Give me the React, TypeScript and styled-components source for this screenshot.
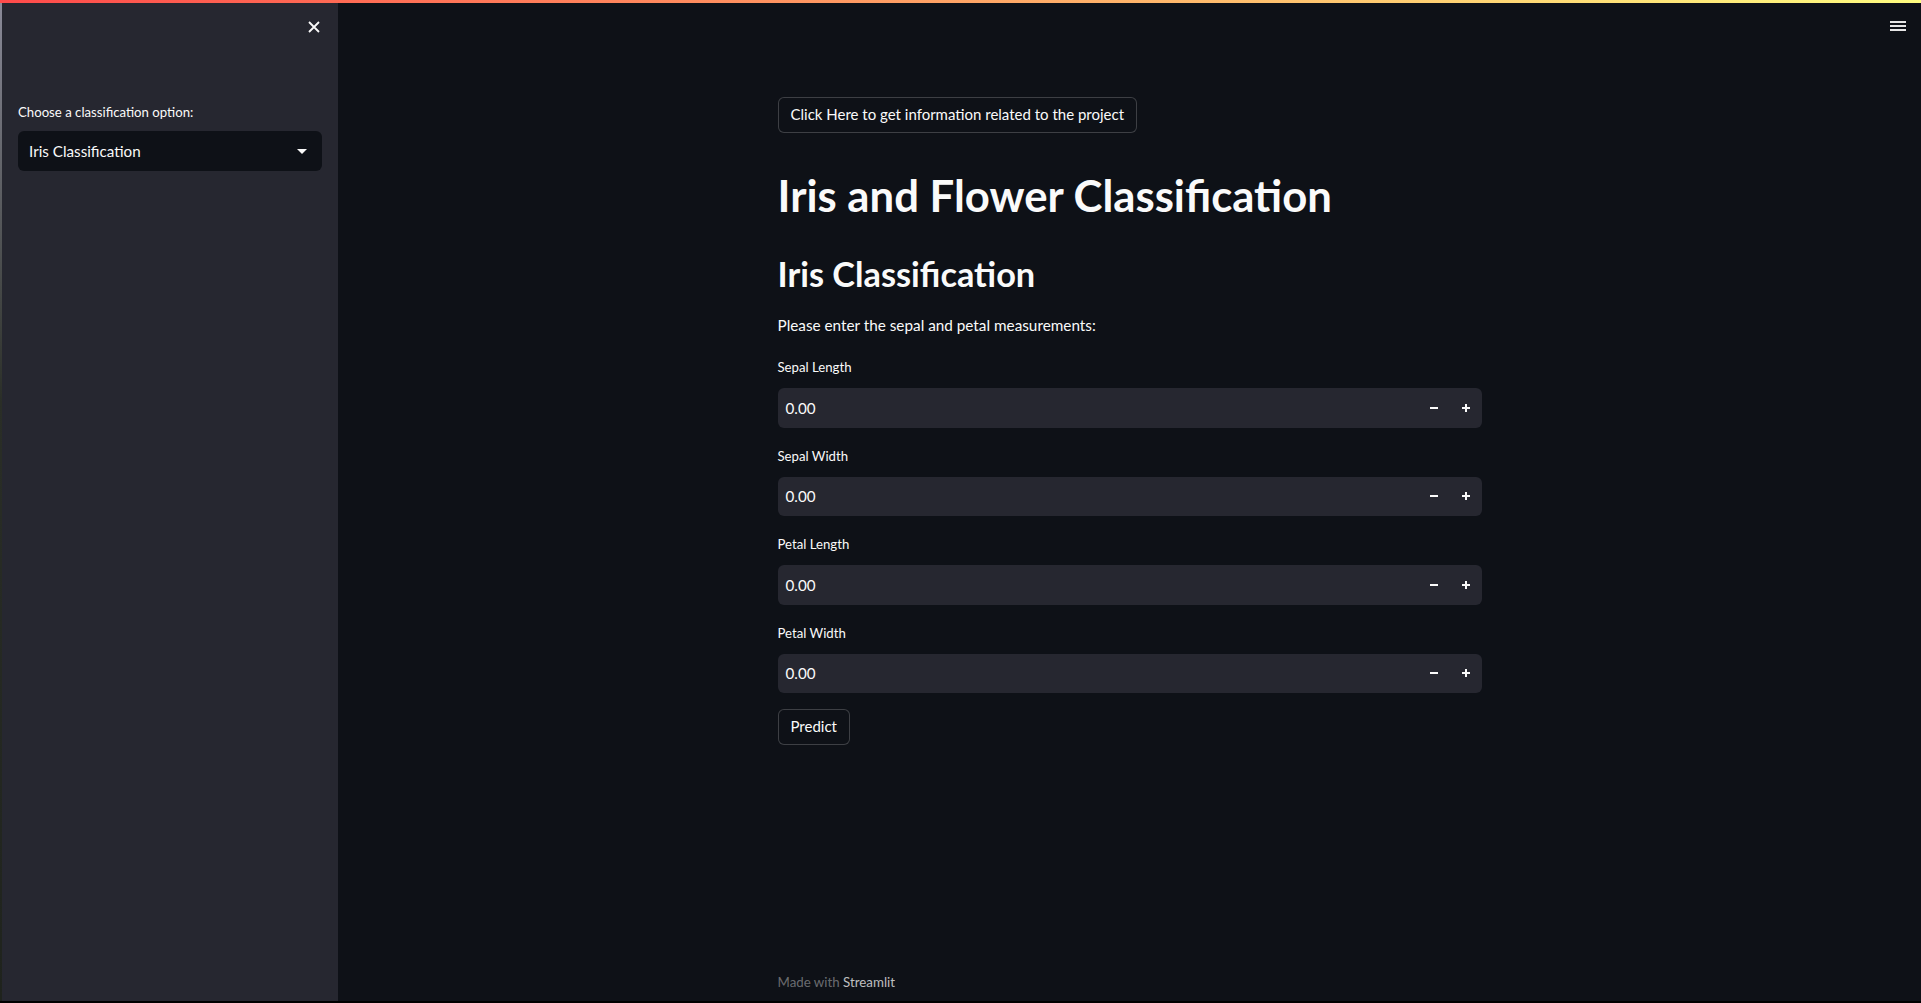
import React from "react";
import styled, { createGlobalStyle } from "styled-components";

const FONT = `Lato, "Noto Sans", sans-serif`;

const GlobalStyle = createGlobalStyle`
  html, body { margin: 0; padding: 0; background: #0e1117; }
  body { font-family: ${FONT}; color: #fafafa; }
  * { box-sizing: border-box; }
`;

const Page = styled.div`
  position: relative;
  width: 1921px;
  height: 1003px;
  display: flex;
  flex-direction: column;
  overflow: hidden;
  background: #0e1117;
`;
const Decoration = styled.div`
  flex: none;
  height: 3px;
  background: linear-gradient(90deg, #ff4b4b, #fffd80);
`;
const BodyRow = styled.div`
  flex: 1;
  display: flex;
  min-height: 0;
`;
const BottomBand = styled.div`
  flex: none;
  height: 2px;
  background: #000;
`;
const Edge = styled.div`
  flex: none;
  width: 2px;
  background: linear-gradient(#8a8a98, #2a2e27 40%, #1f231d);
`;
const Sidebar = styled.aside`
  flex: none;
  width: 336px;
  background: #262730;
  display: flex;
  flex-direction: column;
  padding: 0 16px 0 16px;
`;
const SidebarHeader = styled.div`
  height: 48px;
  display: flex;
  align-items: center;
  justify-content: flex-end;
  padding-right: 2px;
`;
const SideLabel = styled.div`
  margin-top: 49px;
  font-size: 13.2px;
  line-height: 24px;
  height: 24px;
`;
const Select = styled.div`
  margin-top: 7px;
  height: 40px;
  background: #0e1117;
  border-radius: 6px;
  display: flex;
  align-items: center;
  justify-content: space-between;
  padding: 0 15px 0 11px;
  font-size: 15.2px;
`;
const Main = styled.main`
  position: relative;
  flex: 1;
  display: flex;
  justify-content: center;
  min-width: 0;
`;
const Block = styled.div`
  width: 736px;
  padding: 94px 16px 7px;
  display: flex;
  flex-direction: column;
`;
const Button = styled.button<{ $top?: number }>`
  align-self: flex-start;
  margin-top: ${(p) => p.$top ?? 0}px;
  height: 35.6px;
  padding: 0 12px;
  border: 1px solid rgba(250, 250, 250, 0.2);
  border-radius: 6px;
  background: #0e1117;
  color: #fafafa;
  font-family: ${FONT};
  font-size: 15px;
  line-height: 1;
`;
const Title = styled.h1`
  margin: 36.5px 0 0;
  font-size: 43.7px;
  line-height: 53px;
  font-weight: 700;
`;
const Subtitle = styled.h2`
  margin: 30px 0 0;
  font-size: 34.3px;
  line-height: 43px;
  font-weight: 700;
`;
const Para = styled.p`
  margin: 16.5px 0 1.5px;
  font-size: 15.3px;
  line-height: 26px;
`;
const Field = styled.div`
  margin-top: 16px;
  display: flex;
  flex-direction: column;
`;
const FieldLabel = styled.label`
  font-size: 13.2px;
  line-height: 25px;
  height: 25px;
  margin-bottom: 8px;
`;
const InputBox = styled.div`
  height: 39.5px;
  background: #262730;
  border-radius: 6px;
  display: flex;
  align-items: center;
`;
const InputValue = styled.span`
  flex: 1;
  padding-left: 8px;
  font-size: 15.2px;
`;
const StepButton = styled.span`
  width: 32px;
  height: 100%;
  display: flex;
  align-items: center;
  justify-content: center;
`;
const Footer = styled.div`
  margin-top: auto;
  font-size: 13.3px;
  line-height: 24px;
  color: rgba(250, 250, 250, 0.4);
`;
const FooterLink = styled.span`
  color: rgba(250, 250, 250, 0.75);
`;
const Hamburger = styled.div`
  position: absolute;
  top: 18px;
  right: 15px;
  width: 16px;
  display: flex;
  flex-direction: column;
  gap: 2px;
`;
const Bar = styled.span`
  height: 2px;
  background: #e6e6e6;
`;

const Minus = () => (
  <svg width="8" height="8" viewBox="0 0 8 8">
    <rect x="0" y="3" width="8" height="2" fill="#fafafa" />
  </svg>
);
const Plus = () => (
  <svg width="8" height="8" viewBox="0 0 8 8">
    <rect x="0" y="3" width="8" height="2" fill="#fafafa" />
    <rect x="3" y="0" width="2" height="8" fill="#fafafa" />
  </svg>
);
const CloseIcon = () => (
  <svg width="12" height="12" viewBox="0 0 12 12">
    <path d="M1 1L11 11M11 1L1 11" stroke="#fafafa" strokeWidth="1.8" />
  </svg>
);
const Caret = () => (
  <svg width="10" height="5" viewBox="0 0 10 5">
    <polygon points="0,0 10,0 5,5" fill="#fafafa" />
  </svg>
);

const fields = ["Sepal Length", "Sepal Width", "Petal Length", "Petal Width"];

export default function App() {
  return (
    <>
      <GlobalStyle />
      <Page>
        <Decoration />
        <BodyRow>
          <Edge />
          <Sidebar>
            <SidebarHeader>
              <CloseIcon />
            </SidebarHeader>
            <SideLabel>Choose a classification option:</SideLabel>
            <Select>
              <span>Iris Classification</span>
              <Caret />
            </Select>
          </Sidebar>
          <Main>
            <Hamburger>
              <Bar />
              <Bar />
              <Bar />
            </Hamburger>
            <Block>
              <Button>Click Here to get information related to the project</Button>
              <Title>Iris and Flower Classification</Title>
              <Subtitle>Iris Classification</Subtitle>
              <Para>Please enter the sepal and petal measurements:</Para>
              {fields.map((f) => (
                <Field key={f}>
                  <FieldLabel>{f}</FieldLabel>
                  <InputBox>
                    <InputValue>0.00</InputValue>
                    <StepButton>
                      <Minus />
                    </StepButton>
                    <StepButton>
                      <Plus />
                    </StepButton>
                  </InputBox>
                </Field>
              ))}
              <Button $top={16}>Predict</Button>
              <Footer>
                Made with <FooterLink>Streamlit</FooterLink>
              </Footer>
            </Block>
          </Main>
        </BodyRow>
        <BottomBand />
      </Page>
    </>
  );
}
